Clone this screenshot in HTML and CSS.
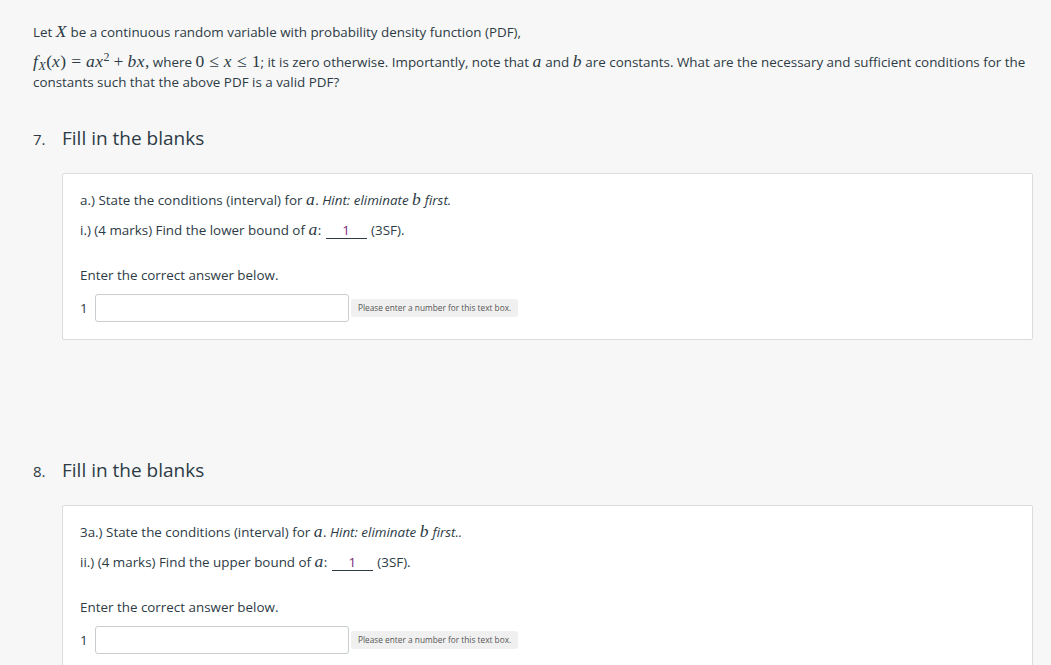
FILE: index.html
```html
<!DOCTYPE html>
<html lang="en">
<head>
<meta charset="utf-8">
<title>Quiz</title>
<link rel="stylesheet" href="styles.css">
</head>
<body>
<div class="page">
  <div class="intro">
    <p>Let <span class="m">X</span> be a continuous random variable with probability density function (PDF),</p>
    <p><span class="m">f<sub>X</sub></span><span class="mr">(</span><span class="m">x</span><span class="mr">)</span><span class="mr op">=</span><span class="m">ax</span><sup class="mr">2</sup><span class="mr op2">+</span><span class="m">bx</span><span class="mr">,</span> where <span class="mr">0</span><span class="mr op">≤</span><span class="m">x</span><span class="mr op">≤</span><span class="mr">1</span>; it is zero otherwise. Importantly, note that <span class="m">a</span> and <span class="m">b</span> are constants. What are the necessary and sufficient conditions for the constants such that the above PDF is a valid PDF?</p>
  </div>

  <div class="question">
    <h2 class="qhead"><span class="qnum">7.</span><span>Fill in the blanks</span></h2>
    <div class="card">
      <p>a.) State the conditions (interval) for <span class="m">a</span>. <em>Hint: eliminate <span class="m">b</span> first.</em></p>
      <p>i.) (4 marks) Find the lower bound of <span class="m">a</span>: <span class="blank">1</span> (3SF).</p>
      <p class="enter">Enter the correct answer below.</p>
      <div class="ansrow">
        <span class="ansnum">1</span>
        <div class="input"></div>
        <span class="tip">Please enter a number for this text box.</span>
      </div>
    </div>
  </div>

  <div class="question second">
    <h2 class="qhead"><span class="qnum">8.</span><span>Fill in the blanks</span></h2>
    <div class="card">
      <p>3a.) State the conditions (interval) for <span class="m">a</span>. <em>Hint: eliminate <span class="m">b</span> first..</em></p>
      <p>ii.) (4 marks) Find the upper bound of <span class="m">a</span>: <span class="blank">1</span> (3SF).</p>
      <p class="enter">Enter the correct answer below.</p>
      <div class="ansrow">
        <span class="ansnum">1</span>
        <div class="input"></div>
        <span class="tip">Please enter a number for this text box.</span>
      </div>
    </div>
  </div>
</div>
</body>
</html>
```

FILE: styles.css
```css
html, body {
  margin: 0;
  padding: 0;
  background: #f7f7f7;
}
body {
  font-family: "Open Sans", "Liberation Sans", sans-serif;
  font-size: 13.4px;
  color: #2d3b45;
  overflow: hidden;
}
.page {
  padding: 22px 8px 0 33px;
}
p {
  margin: 0;
  line-height: 20px;
}
.intro p + p {
  margin-top: 10px;
}
.m {
  font-family: "Liberation Serif", "DejaVu Serif", serif;
  font-style: italic;
  font-size: 17.5px;
  line-height: 0;
  letter-spacing: 0.5px;
}
.mr {
  font-family: "Liberation Serif", "DejaVu Serif", serif;
  font-size: 17.5px;
  line-height: 0;
}
.op {
  margin: 0 5px;
}
.op2 {
  margin: 0 4px;
}
sub, sup {
  line-height: 0;
  font-size: 12px;
}
sub { vertical-align: -3px; font-style: italic; }
sup.mr { vertical-align: 6px; font-size: 12px; line-height: 0; }
em {
  font-style: italic;
}
.question {
  margin-top: 34px;
}
.question.second {
  margin-top: 118px;
}
.qhead {
  margin: 0;
  display: flex;
  align-items: baseline;
  font-size: 19px;
  font-weight: 400;
  line-height: 24px;
  color: #2d3b45;
}
.qnum {
  width: 29px;
  font-size: 15px;
}
.card {
  margin: 22px 0 0 29px;
  background: #fff;
  border: 1px solid #dcdcdc;
  border-radius: 2px;
  padding: 16px 17px 17px 17px;
  box-sizing: border-box;
  width: 971px;
}
.card p + p {
  margin-top: 10px;
}
.card p.enter {
  margin-top: 25px;
}
.blank {
  display: inline-block;
  width: 41px;
  text-align: center;
  border-bottom: 1px solid #2d3b45;
  color: #7a2d7a;
  line-height: 15px;
  margin: 0 1px 0 1px;
}
.ansrow {
  margin-top: 9px;
  display: flex;
  align-items: center;
}
.ansnum {
  width: 15px;
}
.input {
  width: 254px;
  height: 28px;
  box-sizing: border-box;
  border: 1px solid #c7cdd1;
  border-radius: 3px;
  background: #fff;
}
.tip {
  margin-left: 2px;
  height: 18px;
  line-height: 18px;
  padding: 0 7px;
  font-size: 8.3px;
  background: #f0f0f0;
  color: #555;
  border-radius: 3px;
}
```
